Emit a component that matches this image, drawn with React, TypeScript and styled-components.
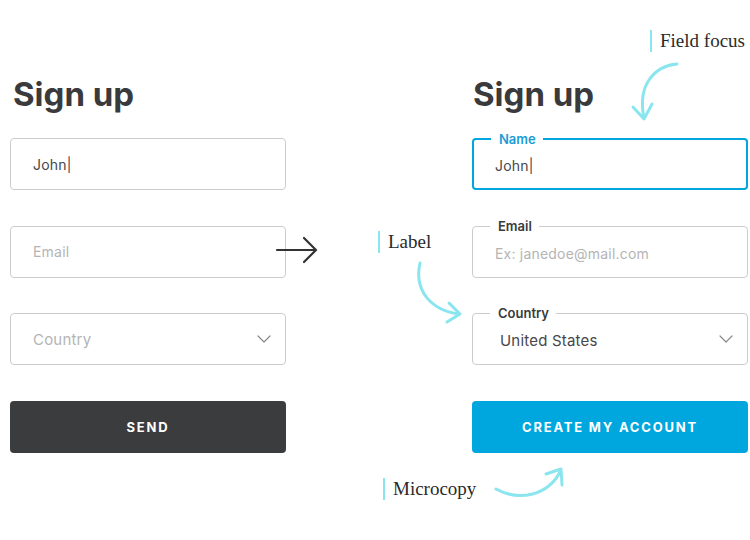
import React from "react";
import styled, { createGlobalStyle } from "styled-components";

const GlobalStyle = createGlobalStyle`
  html, body {
    margin: 0;
    padding: 0;
    background: #ffffff;
  }
  body {
    font-family: Inter, "Noto Sans", sans-serif;
    color: #3a3a3c;
  }
`;

const ACCENT = "#8ae5ef";
const BLUE = "#00a6de";

const Canvas = styled.div`
  position: relative;
  width: 750px;
  height: 540px;
  overflow: hidden;
`;

const Columns = styled.div`
  display: flex;
  gap: 186px;
  padding: 73px 0 0 10px;
`;

const Column = styled.div`
  display: flex;
  flex-direction: column;
  width: 276px;
`;

const Heading = styled.h1<{ $indent: number }>`
  margin: 0 0 22px ${(p) => p.$indent}px;
  font-size: 33px;
  line-height: 43px;
  font-weight: 700;
  letter-spacing: 0;
  color: #3a3a3c;
`;

const Fields = styled.div`
  display: flex;
  flex-direction: column;
  gap: 35.5px;
`;

const Field = styled.div<{ $focus?: boolean }>`
  position: relative;
  box-sizing: border-box;
  height: 52px;
  display: flex;
  align-items: center;
  justify-content: space-between;
  padding: 0 ${(p) => (p.$focus ? "13px" : "14px")} 0 ${(p) => (p.$focus ? "21px" : "22px")};
  border: ${(p) => (p.$focus ? `2px solid ${BLUE}` : "1px solid #cccccc")};
  border-radius: 4px;
  background: #fff;
`;

const FieldText = styled.span<{ $placeholder?: boolean; $size?: number; $shift?: number; $inset?: number }>`
  font-size: ${(p) => p.$size ?? 14}px;
  color: ${(p) => (p.$placeholder ? "#b4b4b4" : "#474749")};
  letter-spacing: 0.2px;
  margin-top: ${(p) => p.$shift ?? 0}px;
  margin-left: ${(p) => p.$inset ?? 0}px;
`;

const FloatLabel = styled.span<{ $focus?: boolean }>`
  position: absolute;
  top: -9px;
  left: 17px;
  padding: 0 7px 0 8px;
  background: #fff;
  font-size: 13px;
  line-height: 16px;
  font-weight: 600;
  color: ${(p) => (p.$focus ? "#1a9cd8" : "#3a3a3c")};
`;

const Button = styled.button<{ $primary?: boolean }>`
  box-sizing: border-box;
  height: 52px;
  width: 100%;
  border: none;
  border-radius: 4px;
  background: ${(p) => (p.$primary ? BLUE : "#3b3c3e")};
  color: #fff;
  font-family: Inter, "Noto Sans", sans-serif;
  font-size: 13px;
  font-weight: 700;
  letter-spacing: 1.8px;
  cursor: pointer;
`;

const Note = styled.div<{ $x: number; $y: number }>`
  position: absolute;
  left: ${(p) => p.$x}px;
  top: ${(p) => p.$y}px;
  display: flex;
  align-items: center;
  gap: 8px;
  font-family: "Liberation Serif", "DejaVu Serif", serif;
  font-size: 19px;
  line-height: 22px;
  color: #2a2a2a;
  &::before {
    content: "";
    display: block;
    width: 2px;
    height: 22px;
    background: ${ACCENT};
  }
`;

const Overlay = styled.svg`
  position: absolute;
  left: 0;
  top: 0;
  pointer-events: none;
`;

const Chevron = () => (
  <svg width="14" height="8" viewBox="0 0 14 8" fill="none">
    <path d="M1 1l6 6 6-6" stroke="#8a8a8a" strokeWidth="1.2" strokeLinecap="round" strokeLinejoin="round" />
  </svg>
);

export default function App() {
  return (
    <Canvas>
      <GlobalStyle />
      <Columns>
        <Column>
          <Heading $indent={3}>Sign up</Heading>
          <Fields>
            <Field>
              <FieldText>John|</FieldText>
            </Field>
            <Field>
              <FieldText $placeholder>Email</FieldText>
            </Field>
            <Field>
              <FieldText $placeholder $size={15}>Country</FieldText>
              <Chevron />
            </Field>
            <Button>SEND</Button>
          </Fields>
        </Column>
        <Column>
          <Heading $indent={1}>Sign up</Heading>
          <Fields>
            <Field $focus>
              <FloatLabel $focus>Name</FloatLabel>
              <FieldText $shift={3}>John|</FieldText>
            </Field>
            <Field>
              <FloatLabel>Email</FloatLabel>
              <FieldText $placeholder $shift={3}>Ex: janedoe@mail.com</FieldText>
            </Field>
            <Field>
              <FloatLabel>Country</FloatLabel>
              <FieldText $size={15} $shift={2} $inset={5}>United States</FieldText>
              <Chevron />
            </Field>
            <Button $primary>CREATE MY ACCOUNT</Button>
          </Fields>
        </Column>
      </Columns>

      <Note $x={650} $y={30}>Field focus</Note>
      <Note $x={378} $y={231}>Label</Note>
      <Note $x={383} $y={478}>Microcopy</Note>

      <Overlay width="750" height="540" viewBox="0 0 750 540" fill="none">
        <g stroke="#333335" strokeWidth="2.2" strokeLinecap="round" strokeLinejoin="round">
          <path d="M277 250H315" />
          <path d="M304 238L316 250L304 262" />
        </g>
        <g stroke={ACCENT} strokeWidth="3" strokeLinecap="round" strokeLinejoin="round">
          <path d="M677 64C655 66 637 84 644 118" />
          <path d="M633 107L644 119L652 104" />
          <path d="M420 263C414 290 430 310 459 314" />
          <path d="M449 303L460 314L447 322" />
          <path d="M496 489C520 502 548 495 560 472" />
          <path d="M546 474L561 469L562 485" />
        </g>
      </Overlay>
    </Canvas>
  );
}
